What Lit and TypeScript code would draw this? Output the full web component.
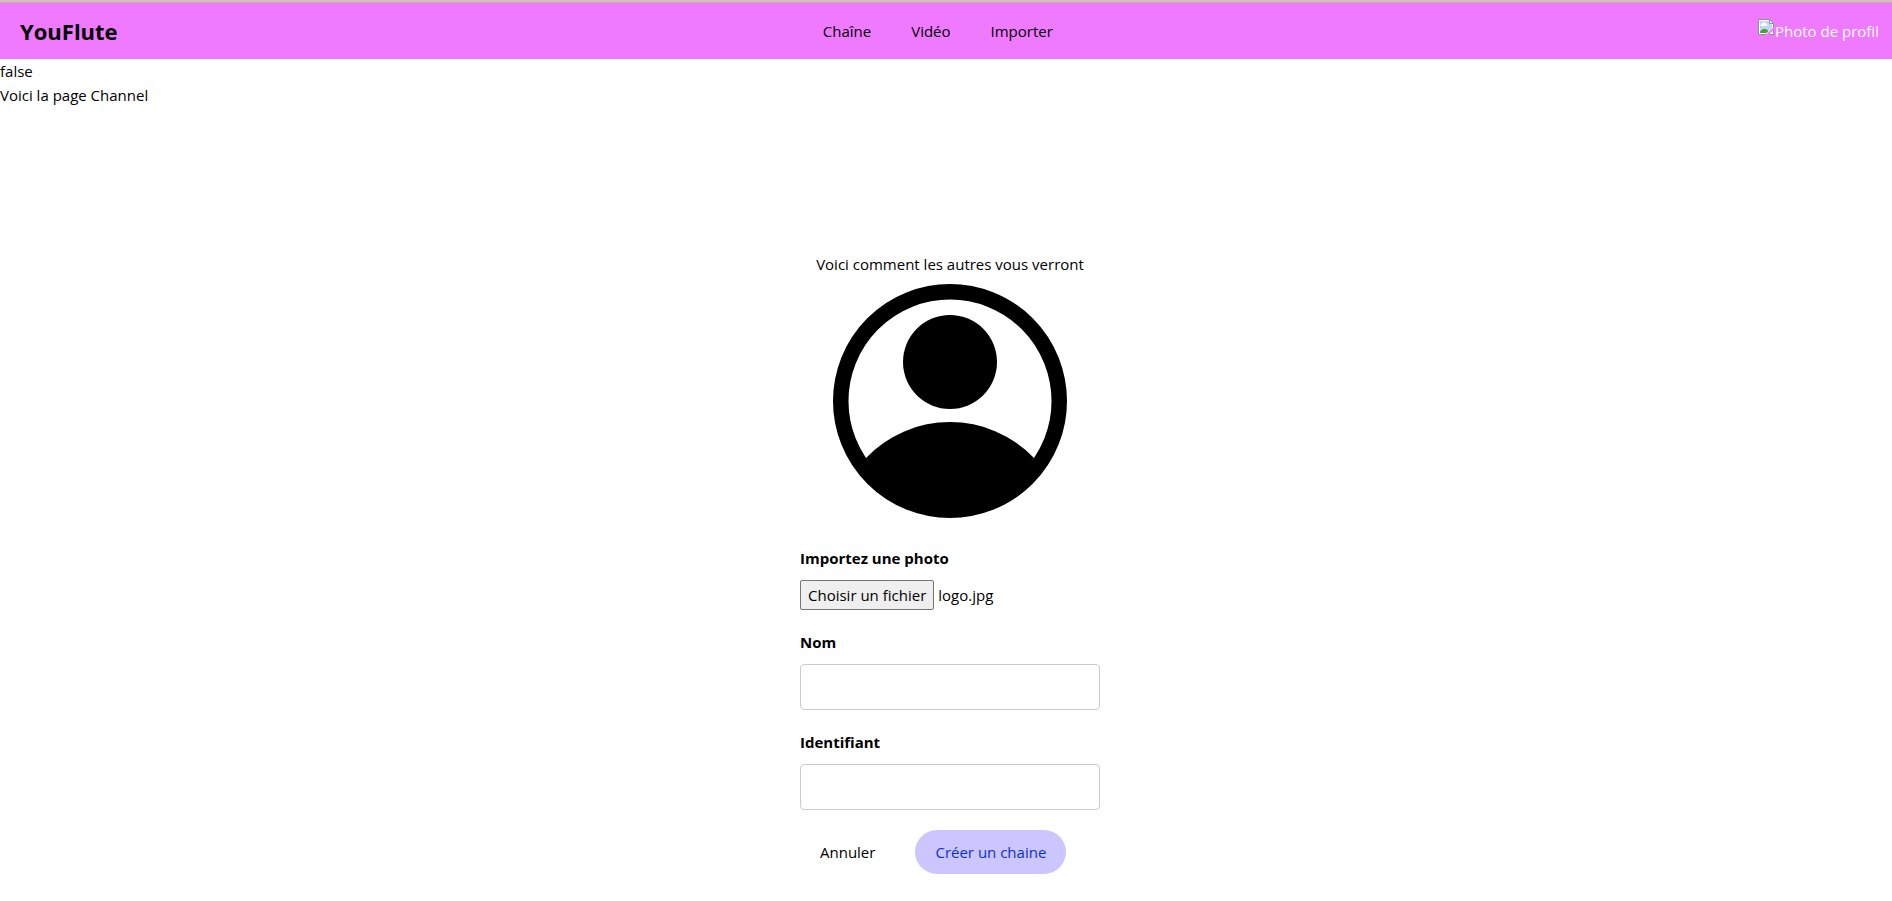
import { LitElement, html, css, svg } from "lit";
import { customElement, state } from "lit/decorators.js";

@customElement("app-header")
class AppHeader extends LitElement {
  static styles = css`
    :host { display: block; border-top: 2px solid #d3c0b8; }
    .bar {
      display: flex;
      justify-content: space-between;
      align-items: center;
      height: 56px;
      padding: 0 13px 0 20px;
      border-top: 1px solid #c8a9ae;
      background: #f07aff;
      color: #000;
    }
    .brand { font-size: 22px; line-height: 32px; font-weight: 700; color: inherit; text-decoration: none; }
    .links { display: flex; gap: 40px; margin: 0; padding: 0; list-style: none; }
    .links a { color: inherit; text-decoration: none; }
    .profile { display: flex; align-items: flex-start; color: #fff; text-decoration: none; }
    .broken { width: 17px; height: 17px; }
  `;

  render() {
    return html`
      <header class="bar">
        <a class="brand" href="#">YouFlute</a>
        <nav>
          <ul class="links">
            <li><a href="#chaine">Chaîne</a></li>
            <li><a href="#video">Vidéo</a></li>
            <li><a href="#importer">Importer</a></li>
          </ul>
        </nav>
        <a class="profile" href="#profil">
          <svg class="broken" viewBox="0 0 17 17" aria-hidden="true">
            <path d="M.5 .5H11.500L15.500 4.500V8L8 15.500H.500Z" fill="#fff" />
            <path d="M2 2H11V5H14V8.500L8.500 14H2Z" fill="#bfd6f8" />
            <path d="M3 7a1.500 1.500 0 0 1 1.200-2.500 2 2 0 0 1 3.600 0 1.500 1.500 0 0 1 1.200 2.500Z" fill="#fff" />
            <path d="M2 14V12.500Q6 7.500 10.500 12L8.500 14Z" fill="#45a52a" />
            <path d="M11 15.500H15.500V11Z" fill="#fff" />
            <path d="M8 15.500H.500V.500H11.500L15.500 4.500V8M15.500 11V15.500H11" fill="none" stroke="#8a9097" />
            <path d="M11.500.500V4.500H15.500Z" fill="#fff" stroke="#8a9097" />
          </svg>
          <span>Photo de profil</span>
        </a>
      </header>
    `;
  }
}

const avatar = svg`
  <circle cx="117" cy="117" r="109.25" fill="none" stroke="#000" stroke-width="15.5" />
  <circle cx="117" cy="78" r="47" />
  <path d="M33 174A116 116 0 0 1 201 174A101.500 101.500 0 0 1 117 225A101.500 101.500 0 0 1 33 174Z" />
`;

@customElement("app-root")
class AppRoot extends LitElement {
  static styles = css`
    * { box-sizing: border-box; }
    :host {
      display: block;
      background: #fff;
      color: #000;
      font: 15px/24px "Segoe UI", "Open Sans", "Noto Sans", sans-serif;
    }
    p { margin: 0; }
    .channel { display: flex; justify-content: center; padding: 145px 0 24px 8px; }
    .form { display: flex; flex-direction: column; gap: 20px; width: 300px; }
    .preview { display: flex; flex-direction: column; align-items: center; gap: 8px; padding-bottom: 8px; }
    .avatar { display: block; width: 234px; height: 234px; }
    .field { display: flex; flex-direction: column; gap: 10px; }
    .label { font-weight: 700; }
    button { font: inherit; color: inherit; cursor: pointer; }
    .file { display: flex; align-items: center; gap: 4px; }
    .pick { height: 30px; padding: 0 7px; border: 1px solid #767676; border-radius: 2px; background: #efefef; white-space: nowrap; }
    .text { width: 100%; height: 46px; padding: 10px; border: 1px solid #ccc; border-radius: 4px; background: #fff; font: inherit; }
    .actions { display: flex; gap: 20px; }
    .action { height: 44px; padding: 0 20px; border: 0; border-radius: 22px; background: none; white-space: nowrap; }
    .primary { background: #cbc6fd; color: #0a2fd8; }
  `;

  @state() private fileName = "logo.jpg";

  private pick() {
    this.renderRoot.querySelector<HTMLInputElement>("#photo")?.click();
  }

  private onFile(e: Event) {
    this.fileName = (e.target as HTMLInputElement).files?.[0]?.name ?? this.fileName;
  }

  render() {
    return html`
      <app-header></app-header>
      <p>false</p>
      <p>Voici la page Channel</p>
      <main class="channel">
        <form class="form" @submit=${(e: Event) => e.preventDefault()}>
          <div class="preview">
            <p>Voici comment les autres vous verront</p>
            <svg class="avatar" viewBox="0 0 234 234" aria-hidden="true">${avatar}</svg>
          </div>
          <div class="field">
            <label class="label" for="photo">Importez une photo</label>
            <div class="file">
              <input id="photo" type="file" accept="image/*" hidden @change=${this.onFile} />
              <button class="pick" type="button" @click=${this.pick}>Choisir un fichier</button>
              <span>${this.fileName}</span>
            </div>
          </div>
          <div class="field">
            <label class="label" for="nom">Nom</label>
            <input class="text" id="nom" type="text" />
          </div>
          <div class="field">
            <label class="label" for="identifiant">Identifiant</label>
            <input class="text" id="identifiant" type="text" />
          </div>
          <div class="actions">
            <button class="action" type="button">Annuler</button>
            <button class="action primary" type="submit">Créer un chaine</button>
          </div>
        </form>
      </main>
    `;
  }
}
